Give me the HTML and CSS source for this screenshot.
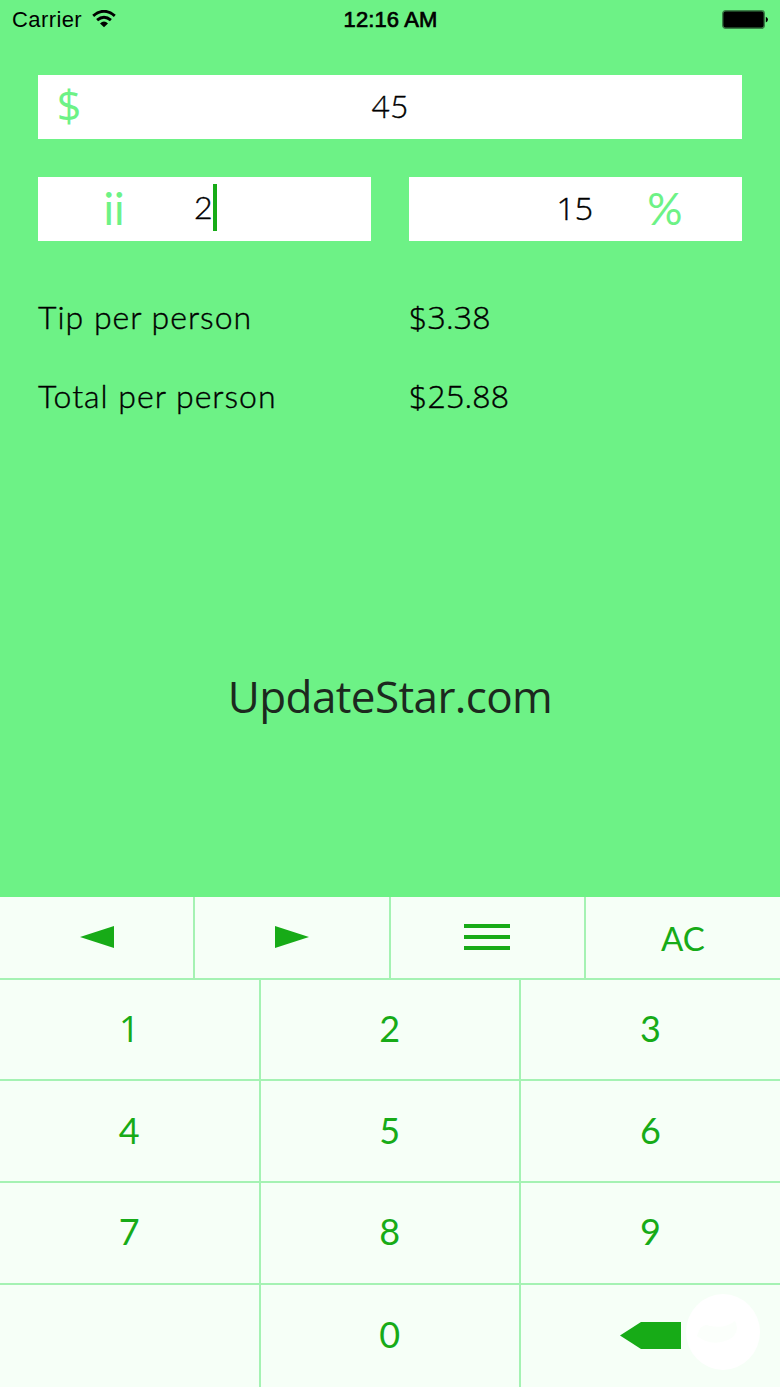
FILE: index.html
```
<!DOCTYPE html>
<html lang="en">
<head>
  <meta charset="UTF-8">
  <meta name="viewport" content="width=device-width, initial-scale=1.0">
  <title>Tip Calculator</title>
  <link rel="stylesheet" href="styles.css">
</head>
<body>
  <div class="status-bar">
    <div class="carrier">
      <span>Carrier</span>
      <svg class="wifi" width="24" height="18" viewBox="0 0 24 18">
        <path d="M1.2 5.9 Q12 -3.3 22.8 5.9" fill="none" stroke="#000" stroke-width="2.9"/>
        <path d="M5.1 10.2 Q12 4.2 18.9 10.2" fill="none" stroke="#000" stroke-width="2.9"/>
        <path d="M8 13.4 Q12 9.6 16 13.4 L12 17.2 Z"/>
      </svg>
    </div>
    <div class="clock">12:16 AM</div>
    <svg class="battery" width="47" height="20" viewBox="0 0 47 20">
      <rect x="0.7" y="0.7" width="41.6" height="17.6" rx="3" fill="#000" stroke="#3b8148" stroke-width="1.4"/>
      <path d="M43.8 6.7 Q46 7.5 46 9.6 Q46 11.8 43.8 12.6 Z"/>
    </svg>
  </div>

  <div class="fields">
    <div class="field amount">
      <span class="symbol dollar">$</span>
      <span class="value">45</span>
    </div>
    <div class="field people">
      <span class="symbol">ii</span>
      <span class="value active">2</span>
    </div>
    <div class="field percent">
      <span class="value">15</span>
      <span class="symbol">%</span>
    </div>
  </div>

  <div class="results">
    <div>Tip per person</div>
    <div class="money">$3.38</div>
    <div>Total per person</div>
    <div class="money">$25.88</div>
  </div>

  <div class="brand">UpdateStar.com</div>

  <div class="keyboard">
    <div class="tools">
      <button class="key"><svg width="34" height="22" viewBox="0 0 34 22"><path d="M0 11 L34 0 V22 Z"/></svg></button>
      <button class="key"><svg width="34" height="22" viewBox="0 0 34 22"><path d="M34 11 L0 0 V22 Z"/></svg></button>
      <button class="key menu"><svg width="46" height="28" viewBox="0 0 46 28"><path d="M0 1h46v4H0z M0 12h46v4H0z M0 23h46v4H0z"/></svg></button>
      <button class="key clear">AC</button>
    </div>
    <div class="digits">
      <button class="key one">1</button>
      <button class="key">2</button>
      <button class="key">3</button>
      <button class="key">4</button>
      <button class="key">5</button>
      <button class="key">6</button>
      <button class="key">7</button>
      <button class="key">8</button>
      <button class="key">9</button>
      <button class="key"></button>
      <button class="key">0</button>
      <button class="key delete"><svg width="61" height="27" viewBox="0 0 61 27"><path d="M0 13.5 L21 0 H61 V27 H21 Z"/></svg></button>
    </div>
    <svg class="badge" width="76" height="78" viewBox="0 0 76 78">
      <ellipse cx="38" cy="39" rx="37" ry="38" fill="#fff"/>
      <path d="M12 43 Q16 29 25 33 Q40 36 50 28 Q56 40 43 47 Q26 54 12 43 Z" fill="#fbfffb"/>
    </svg>
  </div>
</body>
</html>
```
FILE: styles.css
```
* {
  box-sizing: border-box;
}
body {
  margin: 0;
  height: 1387px;
  display: flex;
  flex-direction: column;
  position: relative;
  overflow: hidden;
  background-color: #6df286;
  color: #000;
  font-family: Lato, sans-serif;
}
.status-bar {
  display: grid;
  grid-template-columns: 1fr auto 1fr;
  align-items: center;
  height: 40px;
  padding: 0 11px 0 12px;
  font-family: "Liberation Sans", Arial, sans-serif;
  font-size: 22px;
}
.carrier {
  display: flex;
  align-items: center;
  gap: 10px;
  letter-spacing: 0.4px;
}
.wifi {
  margin-bottom: 3px;
}
.clock {
  -webkit-text-stroke: 0.7px #000;
  letter-spacing: 0.1px;
}
.battery {
  justify-self: end;
}
.fields {
  display: grid;
  grid-template-columns: 1fr 1fr;
  gap: 38px;
  padding: 35.4px 38px 0;
}
.field {
  display: grid;
  align-items: center;
  height: 64px;
  padding-bottom: 3px;
  background-color: #fff;
  font-size: 32px;
}
.amount {
  grid-column: 1 / 3;
  grid-template-columns: 62px 1fr 62px;
}
.people {
  grid-template-columns: 152px 1fr;
}
.percent {
  grid-template-columns: 1fr 149px;
}
.symbol {
  color: #6df286;
  font-size: 44px;
  line-height: 54px;
  text-align: center;
}
.dollar {
  font-family: "Open Sans", sans-serif;
  font-size: 43px;
}
.percent .symbol {
  padding-right: 5px;
}
.value {
  font-family: Lato, sans-serif;
  font-weight: 300;
  text-align: center;
  -webkit-text-stroke: 0.4px #000;
}
.people .value {
  justify-self: start;
  margin-left: 4px;
}
.percent .value {
  justify-self: end;
  font-family: "Open Sans", sans-serif;
}
.active {
  height: 47px;
  line-height: 46px;
  border-right: 4px solid #17ab17;
}
.results {
  display: grid;
  grid-template-columns: 371px 1fr;
  row-gap: 39px;
  padding: 56px 38px 0;
  font-size: 32px;
  font-weight: 300;
  line-height: 40px;
  letter-spacing: 1px;
  -webkit-text-stroke: 0.4px #000;
}
.money {
  font-family: "Open Sans", sans-serif;
  letter-spacing: 0.2px;
}
.brand {
  margin-top: 248px;
  color: #1c291e;
  font-family: "Open Sans", sans-serif;
  font-size: 44px;
  line-height: 64px;
  letter-spacing: -0.6px;
  text-align: center;
}
.keyboard {
  position: relative;
  height: 490px;
  margin-top: auto;
  background-color: #f6fff7;
}
.tools {
  display: grid;
  grid-template-columns: 195px 196px 195px 1fr;
  height: 82.5px;
}
.digits {
  display: grid;
  grid-template-columns: 260.5px 260.5px 1fr;
  grid-template-rows: repeat(4, 101.75px);
}
.key {
  display: flex;
  align-items: center;
  justify-content: center;
  padding: 0;
  border: 0 solid #a5f2b3;
  border-width: 0 2px 2px 0;
  background: none;
  color: #17ab17;
  font-family: inherit;
  font-size: 36px;
}
.digits .key {
  padding-bottom: 3px;
}
.digits .delete {
  padding-bottom: 0;
}
.digits .one {
  padding-bottom: 1px;
  font-family: "Open Sans", sans-serif;
}
.key svg {
  fill: #17ab17;
}
.tools .key:last-child, .digits .key:nth-child(3n) {
  border-right: 0;
}
.digits .key:nth-child(n + 10) {
  border-bottom: 0;
}
.menu {
  padding-right: 1px;
}
.clear {
  padding-top: 1px;
  font-size: 33px;
}
/* sits over the corner of the last key */
.badge {
  position: absolute;
  right: 19px;
  bottom: 16px;
}
```
